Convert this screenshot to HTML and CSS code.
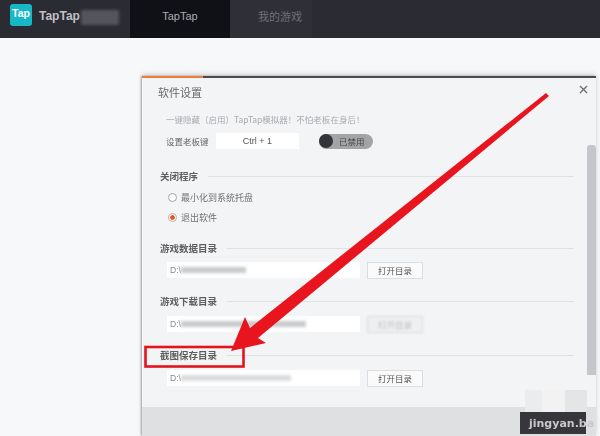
FILE: index.html
```html
<!DOCTYPE html>
<html lang="zh-CN">
<head>
    <meta charset="UTF-8">
    <meta name="viewport" content="width=device-width, initial-scale=1.0">
    <title>TapTap 软件设置</title>
    <link rel="stylesheet" href="styles.css">
</head>
<body>
    <div class="page">
        <header class="topbar">
            <div class="brand">
                <div class="logo">Tap</div>
                <span class="brand-name">TapTap</span>
                <span class="brand-hidden"></span>
            </div>
            <div class="tab tab-active">TapTap</div>
            <div class="tab tab-games">我的游戏</div>
        </header>

        <main class="content">
            <section class="dialog">
                <div class="dialog-bar"><span class="dialog-bar-accent"></span></div>
                <div class="close">
                    <svg width="9" height="9" viewBox="0 0 9 9"><path d="M1 1L8 8M8 1L1 8" stroke="#6c7076" stroke-width="1.4" fill="none"/></svg>
                </div>
                <div class="scrollbar"></div>
                <h1 class="dialog-title">软件设置</h1>

                <p class="hint">一键隐藏（启用）TapTap模拟器！不怕老板在身后！</p>
                <div class="hotkey">
                    <span class="hotkey-label">设置老板键</span>
                    <div class="hotkey-input">Ctrl + 1</div>
                    <div class="toggle"><span class="toggle-knob"></span><span>已禁用</span></div>
                </div>

                <div class="section section-close">
                    <h2 class="section-title">关闭程序</h2>
                    <label class="radio"><span class="radio-dot"></span>最小化到系统托盘</label>
                    <label class="radio radio-on"><span class="radio-dot"></span>退出软件</label>
                </div>

                <div class="section section-data">
                    <h2 class="section-title">游戏数据目录</h2>
                    <div class="dir-row">
                        <div class="dir-input">D:\<span class="smudge smudge-a"></span></div>
                        <div class="dir-button">打开目录</div>
                    </div>
                </div>

                <div class="section section-download">
                    <h2 class="section-title">游戏下载目录</h2>
                    <div class="dir-row">
                        <div class="dir-input">D:\<span class="smudge smudge-b"></span></div>
                        <div class="dir-button dir-button-blurred">打开目录</div>
                    </div>
                </div>

                <div class="section section-shots">
                    <h2 class="section-title">截图保存目录</h2>
                    <div class="dir-row">
                        <div class="dir-input">D:\<span class="smudge smudge-c"></span></div>
                        <div class="dir-button">打开目录</div>
                    </div>
                </div>

                <div class="dialog-footer"></div>
            </section>
        </main>

        <svg class="markup" width="600" height="436" viewBox="0 0 600 436">
            <rect x="145.5" y="347" width="98" height="19.5" fill="none" stroke="#e4141d" stroke-width="2.6"/>
            <polygon points="546,93 549,96 258,338 266,343 231,351 245,317 250,328" fill="#e8151f"/>
        </svg>

        <div class="mosaic">
            <span class="mosaic-a"></span>
            <span class="mosaic-b"></span>
            <span class="mosaic-c"></span>
        </div>
        <div class="watermark">jingyan.ba</div>
    </div>
</body>
</html>
```

FILE: styles.css
```css
* {
    box-sizing: border-box;
}
html, body {
    margin: 0;
    height: 436px;
    overflow: hidden;
}
body {
    font-family: "Noto Sans CJK SC", "Liberation Sans", sans-serif;
    background-color: #f7f8fa;
    color: #555;
}
.page {
    position: relative;
    width: 600px;
    height: 436px;
    overflow: hidden;
    filter: blur(0.5px);
}

/* top bar */
.topbar {
    display: flex;
    height: 38px;
    background-color: #2b2b34;
}
.brand {
    display: flex;
    align-items: flex-start;
    width: 130px;
    padding: 4px 0 0 10px;
}
.logo {
    width: 22px;
    height: 22px;
    border-radius: 3px;
    background-color: #17b8c6;
    color: #fff;
    font: bold 10.5px/19px "Liberation Sans", sans-serif;
    text-align: center;
}
.brand-name {
    margin: 4px 0 0 7px;
    color: #c0c1c6;
    font: bold 12px/16px "Liberation Sans", sans-serif;
}
.brand-hidden {
    width: 38px;
    height: 15px;
    margin: 6px 0 0 1px;
    background-color: #55555e;
    filter: blur(1.5px);
}
.tab {
    height: 38px;
    font-size: 11px;
    line-height: 32px;
    text-align: center;
}
.tab-active {
    width: 100px;
    background-color: #101116;
    color: #a9abb0;
    font-family: "Liberation Sans", sans-serif;
}
.tab-games {
    width: 82px;
    padding-left: 18px;
    background-color: #2f2f38;
    color: #6f6f75;
}

/* dialog */
.content {
    padding: 38px 4px 0 142px;
}
.dialog {
    position: relative;
    height: 360px;
    background-color: #f3f4f6;
    box-shadow: 0 -2px 5px rgba(0, 0, 0, 0.15), -1px 0 2px rgba(0, 0, 0, 0.3);
}
.dialog-bar {
    height: 2px;
    background-color: #4b4b4f;
}
.dialog-bar-accent {
    display: block;
    width: 61px;
    height: 2px;
    background-color: #ee7d3c;
}
.close {
    position: absolute;
    top: 9px;
    right: 8px;
    width: 9px;
    height: 9px;
    line-height: 0;
}
.scrollbar {
    position: absolute;
    top: 69px;
    right: 0;
    width: 9px;
    height: 230px;
    border-radius: 3px 3px 0 0;
    background-color: #c4c6cb;
}
.dialog-title {
    margin: 6px 0 0 16px;
    color: #6a6a6a;
    font-size: 11px;
    font-weight: normal;
    line-height: 16px;
}
.hint {
    margin: 12px 0 0 24px;
    color: #a9abaf;
    font-size: 8.5px;
    line-height: 14px;
}
.hotkey {
    display: flex;
    align-items: center;
    height: 16px;
    margin: 7px 0 0 24px;
    color: #666;
    font-size: 8.5px;
}
.hotkey-label {
    width: 50px;
}
.hotkey-input {
    width: 83px;
    height: 16px;
    background-color: #fff;
    color: #555;
    font: 9px/17px "Liberation Sans", sans-serif;
    text-align: center;
}
.toggle {
    display: flex;
    align-items: center;
    gap: 6px;
    width: 54px;
    height: 15px;
    margin-left: 20px;
    border-radius: 8px;
    background-color: #a3a4a6;
    color: #444;
}
.toggle-knob {
    width: 14px;
    height: 14px;
    border-radius: 50%;
    background-color: #34343a;
}

/* sections */
.section {
    margin-left: 18px;
    margin-right: 22px;
}
.section-title {
    display: flex;
    align-items: center;
    gap: 10px;
    height: 14px;
    margin: 0;
    color: #5f5f5f;
    font-size: 9.5px;
    font-weight: bold;
}
.section-title::after {
    content: "";
    flex: 1;
    height: 1px;
    background-color: #e0e1e4;
}
.section-close {
    margin-top: 20px;
}
.section-data {
    margin-top: 17px;
}
.section-download {
    margin-top: 15px;
}
.section-download .dir-row {
    margin-top: 8px;
}
.section-shots {
    margin-top: 15px;
}
.section-shots .dir-row {
    margin-top: 8px;
}
.radio {
    display: flex;
    align-items: center;
    gap: 4px;
    height: 14px;
    margin: 7px 0 0 8px;
    color: #707070;
    font-size: 9px;
}
.radio + .radio {
    margin-top: 6px;
}
.radio-dot {
    width: 9px;
    height: 9px;
    border: 1px solid #a6a6a6;
    border-radius: 50%;
    background-color: #fff;
}
.radio-on .radio-dot {
    border-color: #d9a590;
    background: radial-gradient(circle, #e0532c 0 2px, #fff 2.5px);
}
.dir-row {
    display: flex;
    gap: 7px;
    margin: 7px 0 0 7px;
}
.dir-input {
    display: flex;
    align-items: center;
    width: 193px;
    height: 16px;
    padding-left: 3px;
    background-color: #fff;
    color: #888;
    font: 8.5px/16px "Liberation Sans", sans-serif;
}
.smudge {
    height: 6px;
    background-color: #c9cacc;
    filter: blur(1.5px);
}
.smudge-a {
    width: 65px;
}
.smudge-b {
    width: 125px;
}
.smudge-c {
    width: 110px;
    background-color: #dadbdd;
}
.dir-button {
    width: 56px;
    height: 17px;
    border: 1px solid #dcdde0;
    background-color: #fafafa;
    color: #555;
    font-size: 8.5px;
    line-height: 15px;
    text-align: center;
}
.dir-button-blurred {
    color: #bbb;
    background-color: #eeeff1;
    filter: blur(1px);
}
.dialog-footer {
    position: absolute;
    left: 0;
    right: 0;
    top: 331px;
    height: 29px;
    background-color: #dfe0e2;
}

/* annotations */
.markup {
    position: absolute;
    top: 0;
    left: 0;
}
.mosaic {
    position: absolute;
    top: 390px;
    left: 525px;
    display: flex;
    height: 22px;
}
.mosaic-a {
    width: 17px;
    background-color: #ebecee;
}
.mosaic-b {
    width: 23px;
    background-color: #f1f2f1;
}
.mosaic-c {
    width: 22px;
    background-color: #e4e5e7;
}
.watermark {
    position: absolute;
    top: 412px;
    left: 520px;
    width: 80px;
    height: 22px;
    padding-left: 9px;
    background: linear-gradient(to right, #37373b 66px, transparent 66px);
    color: #c8c8ca;
    font: bold 11px/24px "DejaVu Sans", sans-serif;
    white-space: nowrap;
    overflow: hidden;
}
```
